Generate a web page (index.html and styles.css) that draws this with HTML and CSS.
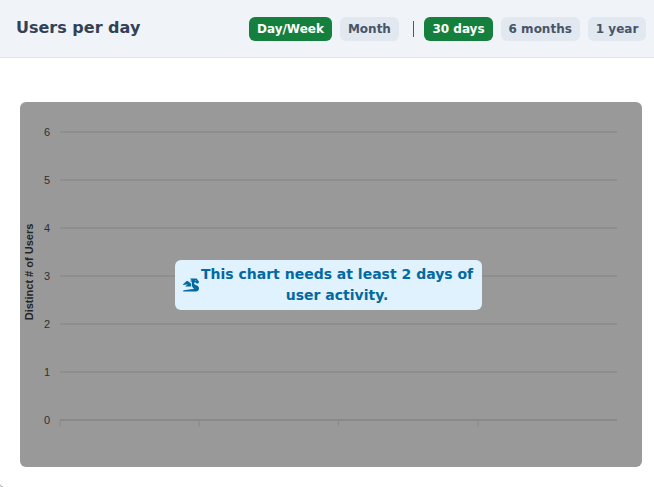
FILE: index.html
```html
<!DOCTYPE html>
<html lang="en">
<head>
<meta charset="utf-8">
<title>Users per day</title>
<link rel="stylesheet" href="styles.css">
</head>
<body>
<section class="card">
  <header class="header">
    <h2 class="title">Users per day</h2>
    <div class="filters">
      <button class="pill active">Day/Week</button>
      <button class="pill">Month</button>
      <span class="divider"></span>
      <button class="pill active">30 days</button>
      <button class="pill">6 months</button>
      <button class="pill">1 year</button>
    </div>
  </header>
  <div class="chart">
    <svg class="plot" width="622" height="365" viewBox="0 0 622 365">
      <g class="grid">
        <path d="M40 30H597M40 78H597M40 126H597M40 174H597M40 222H597M40 270H597"/>
        <path class="axis" d="M40 318H597"/>
      </g>
      <path class="ticks" d="M40.2 319v5.5M179.3 319v5.5M318.5 319v5.5M457.8 319v5.5"/>
      <g class="labels">
        <text x="30" y="34">6</text>
        <text x="30" y="82">5</text>
        <text x="30" y="130">4</text>
        <text x="30" y="178">3</text>
        <text x="30" y="226">2</text>
        <text x="30" y="274">1</text>
        <text x="30" y="322">0</text>
      </g>
      <text class="axis-title" transform="translate(13.3 170) rotate(-90)">Distinct # of Users</text>
    </svg>
    <div class="notice">
      <svg class="icon" width="16" height="16" viewBox="0 0 640 512">
        <path d="M18.32 255.78L192 223.96l-91.28 68.69c-10.08 10.08-2.94 27.31 11.31 27.31h222.7c-9.44-26.4-14.73-54.47-14.73-83.38v-42.27l-119.73-87.6c-23.82-15.88-55.29-14.01-77.06 4.59L5.81 227.64c-12.38 10.33-3.45 30.42 12.51 28.14zm556.87 34.1l-100.66-50.31A47.992 47.992 0 0 1 448 196.65v-36.69h64l28.09 22.63c6 6 14.14 9.37 22.63 9.37h30.97a32 32 0 0 0 28.62-17.69l14.31-28.62a32.005 32.005 0 0 0-3.02-33.51l-74.53-99.38C553.02 4.7 543.54 0 533.47 0H296.02c-7.13 0-10.7 8.57-5.66 13.61L352 63.96 292.42 88.8c-5.9 2.95-5.9 11.36 0 14.31L352 127.96v108.62c0 72.08 36.03 139.39 96 179.38-195.59 6.81-344.56 41.01-434.1 60.91C5.78 478.67 0 485.88 0 494.2 0 504 7.95 512 17.76 512h499.08c63.29.01 119.61-47.56 122.99-110.76 2.52-47.28-22.73-90.4-64.64-111.36zM489.18 66.25l45.65 11.41c-2.75 10.91-12.47 18.89-24.13 18.26-12.96-.71-25.85-12.53-21.52-29.67z"/>
      </svg>
      <p class="message">This chart needs at least 2 days of user activity.</p>
    </div>
  </div>
</section>
</body>
</html>
```
FILE: styles.css
```css
* {
  box-sizing: border-box;
}

body {
  margin: 0;
  background: #fff;
  font-family: "DejaVu Sans", sans-serif;
  overflow: hidden;
}

.card {
  height: 488px;
  margin-left: -1px;
  margin-right: -8px;
  border: 1px solid #b5b8bc;
  border-top: 0;
  border-left-color: #fff;
  border-bottom-color: #fff;
  border-radius: 0 0 8px 8px;
  background: #fff;
  box-shadow: 0 1px 2px #777;
}

.header {
  display: flex;
  align-items: center;
  justify-content: space-between;
  height: 58px;
  padding: 0 14.65px 0 16px;
  border-bottom: 1px solid #dfe5ed;
  background: #f0f3f8;
}

.title {
  margin: 0 0 2px;
  color: #334155;
  font-size: 16px;
  line-height: 24px;
}

.filters {
  display: flex;
  align-items: center;
  gap: 8px;
}

.pill {
  height: 24px;
  padding: 0 8px;
  border: 0;
  border-radius: 6px;
  background: #e2e8f0;
  color: #475569;
  font: bold 12px/24px "DejaVu Sans", sans-serif;
  white-space: nowrap;
}

.active {
  background: #15803d;
  color: #fff;
}

.divider {
  width: 1.5px;
  height: 16px;
  margin: 0 2px 0 6px;
  background: #4b586b;
}

.chart {
  display: grid;
  width: 622px;
  height: 365px;
  margin: 44px 0 0 20px;
  border-radius: 6px;
  background: #999;
  overflow: hidden;
}

.plot,
.notice {
  grid-area: 1 / 1;
}

.grid {
  fill: none;
  stroke: #8f8f8f;
  stroke-width: 2;
}

.axis {
  stroke: #898989;
}

.ticks {
  stroke: #898989;
}

.labels {
  fill: #303030;
  font: 11px "Liberation Sans", sans-serif;
  text-anchor: end;
}

.axis-title {
  fill: #252525;
  font: bold 11px "Liberation Sans", sans-serif;
  text-anchor: middle;
}

.notice {
  z-index: 1;
  display: flex;
  align-items: center;
  align-self: center;
  width: 307px;
  height: 50px;
  margin-left: 155.4px;
  padding: 0 7.4px 0 7.8px;
  border-radius: 6px;
  background: #e0f2fe;
  color: #0369a1;
}

.icon {
  flex: none;
  fill: currentColor;
}

.message {
  flex: 1;
  margin: 0;
  font-size: 14px;
  font-weight: bold;
  line-height: 21px;
  text-align: center;
}
```
